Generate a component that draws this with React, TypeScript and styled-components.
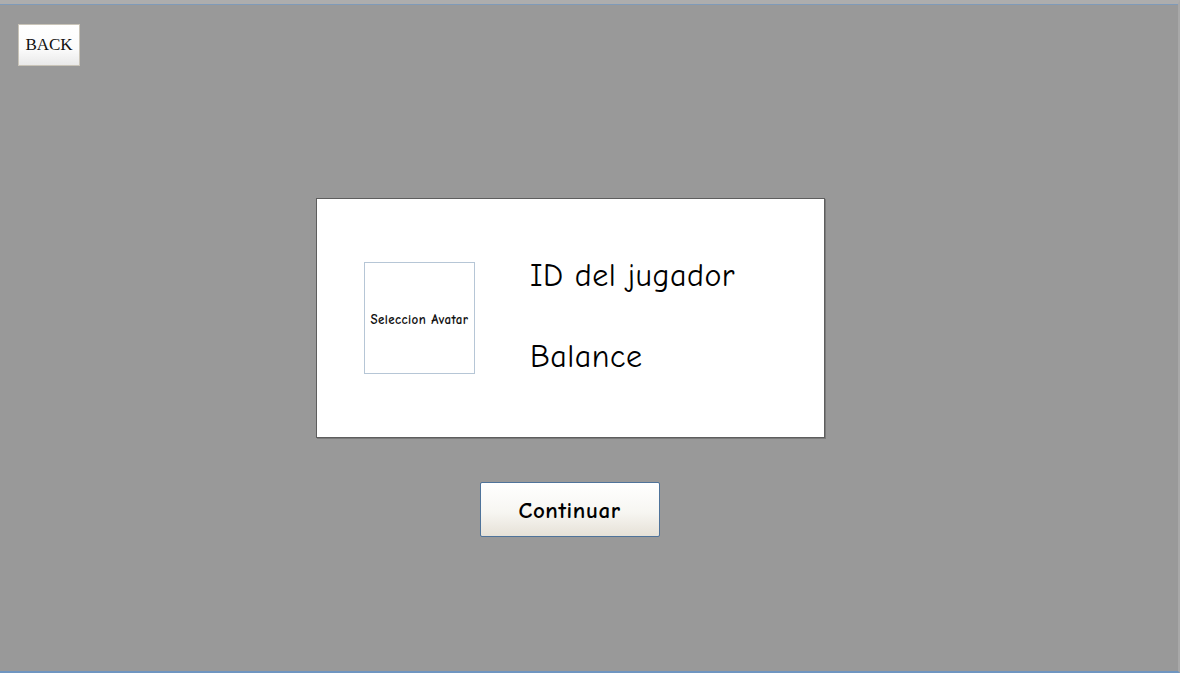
import React from "react";
import styled, { createGlobalStyle } from "styled-components";

const Global = createGlobalStyle`
  html, body { margin: 0; padding: 0; background: #999999; }
  * { box-sizing: border-box; }
`;

const hand = `"Comic Sans MS", "Comic Neue", "DejaVu Sans", sans-serif`;

const Page = styled.div`
  width: 1180px;
  height: 673px;
  display: flex;
  flex-direction: column;
  background: #999999;
  border-top: 4px solid #adadad;
  border-right: 2px solid #a8a8a8;
  border-bottom: 2px solid #6f95c0;
  overflow: hidden;
`;

const TopLine = styled.div`
  height: 1px;
  background: #7f9ab8;
`;

const BackButton = styled.button`
  align-self: flex-start;
  margin: 19px 0 0 18px;
  width: 62px;
  height: 42px;
  padding: 0;
  border: 1px solid #c9c4b8;
  background: linear-gradient(#ffffff 0%, #fbfbfb 60%, #e9e9e9 100%);
  font-family: "Liberation Serif", serif;
  font-size: 17px;
  color: #111;
`;

const Column = styled.div`
  margin: 132px 0 0 316px;
  width: 509px;
  display: flex;
  flex-direction: column;
  align-items: center;
  gap: 44px;
`;

const Card = styled.div`
  width: 509px;
  height: 240px;
  background: #ffffff;
  border: 1px solid #5e5e5e;
  box-shadow: 1px 1px 0 #7a7a7a;
  display: flex;
  align-items: flex-start;
  padding: 63px 0 0 47px;
  gap: 55px;
  align-self: stretch;
`;

const Avatar = styled.div`
  width: 111px;
  height: 112px;
  border: 1px solid #b6c6d6;
  display: flex;
  align-items: center;
  justify-content: center;
  font-family: ${hand};
  font-size: 13px;
  font-weight: bold;
  letter-spacing: 0.4px;
  color: #111;
  white-space: nowrap;
  padding-top: 3px;
`;

const Info = styled.div`
  display: flex;
  flex-direction: column;
  gap: 37px;
  margin-top: -8px;
`;

const InfoLine = styled.div`
  font-family: ${hand};
  font-size: 32px;
  line-height: 44px;
  letter-spacing: 0.5px;
  color: #000;
  white-space: nowrap;
`;

const ContinueButton = styled.button`
  width: 180px;
  height: 55px;
  margin-right: 2px;
  border: 1px solid #4f739a;
  border-radius: 2px;
  background: linear-gradient(#ffffff 0%, #f7f6f2 55%, #e6e1d7 100%);
  font-family: ${hand};
  font-weight: bold;
  font-size: 23px;
  letter-spacing: 0.6px;
  color: #000;
  padding: 2px 0 0;
`;

export default function App() {
  return (
    <>
      <Global />
      <Page>
        <TopLine />
        <BackButton>BACK</BackButton>
        <Column>
          <Card>
            <Avatar>Seleccion Avatar</Avatar>
            <Info>
              <InfoLine>ID del jugador</InfoLine>
              <InfoLine>Balance</InfoLine>
            </Info>
          </Card>
          <ContinueButton>Continuar</ContinueButton>
        </Column>
      </Page>
    </>
  );
}
